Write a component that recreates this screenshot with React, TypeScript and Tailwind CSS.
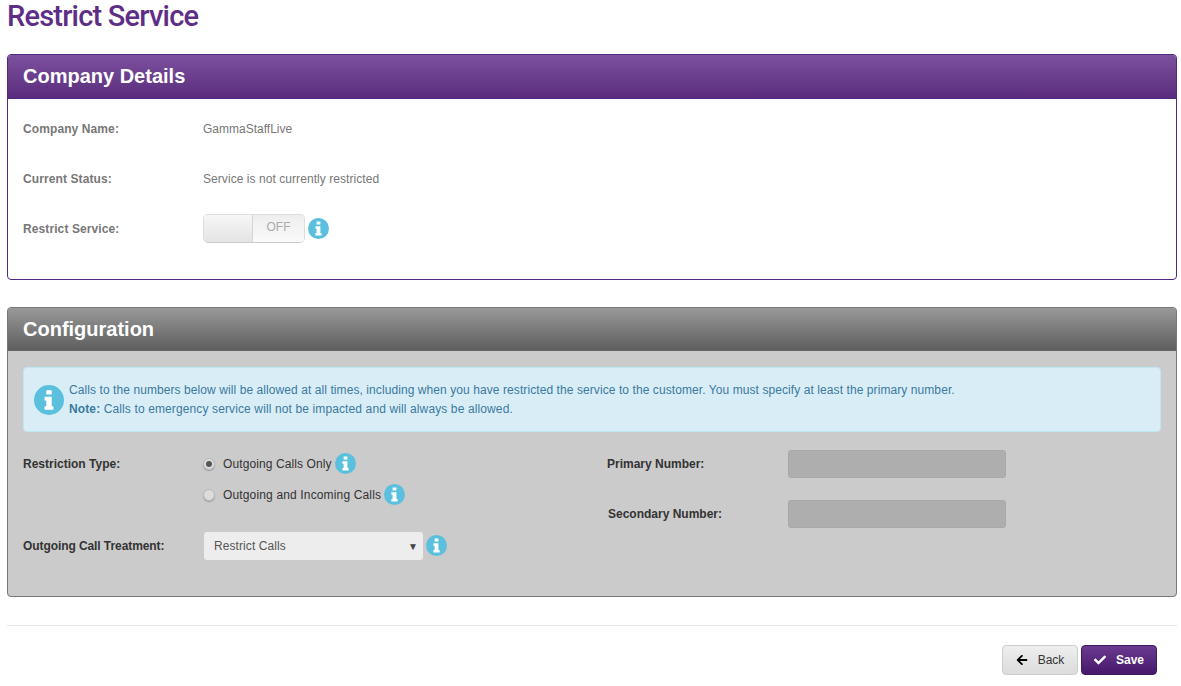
import React from "react";
import { FaArrowLeft, FaCheck } from "react-icons/fa";

// slab "i" disc, the package one has a thinner stem
const InfoDisc = ({ className = "" }: { className?: string }) => (
  <svg viewBox="0 0 21 21" className={`shrink-0 ${className}`}>
    <circle cx="10.5" cy="10.5" r="10.5" fill="#5bc0de" />
    <path
      fill="#fff"
      d="M8.6 3.6h3.8v3H8.6zM7.4 8.2h5v6.7h1.2v2.5H7.4v-2.5h1.2v-4.1H7.4z"
    />
  </svg>
);

const Info = ({ className = "" }: { className?: string }) => (
  <InfoDisc className={`w-[21px] h-[21px] ${className}`} />
);

const DetailRow = ({ label, children }: { label: string; children: React.ReactNode }) => (
  <div className="flex items-center h-[50px]">
    <span className="w-[180px] font-bold text-[#777] tracking-[0.1px]">{label}</span>
    {children}
  </div>
);

const Radio = ({ checked }: { checked?: boolean }) => (
  <span className="w-3 h-3 mr-2 rounded-full bg-[#dcdcdc] border border-[#bbb] shadow-[0_1px_1px_rgba(0,0,0,0.25)] flex items-center justify-center shrink-0">
    {checked && <span className="w-[6px] h-[6px] rounded-full bg-[#555]" />}
  </span>
);

const App: React.FC = () => {
  return (
    <div className="w-[1181px] h-[686px] overflow-hidden bg-white px-[7px] text-[12px] font-['Liberation_Sans',Arial,sans-serif]">
      <h1 className="h-[54px] text-[29px] leading-[32px] font-medium text-[#5e2d85] font-['Roboto',sans-serif] tracking-[-0.8px]">
        Restrict Service
      </h1>

      <section className="w-[1170px] h-[226px] border border-[#4e2a84] rounded-[4px] overflow-hidden">
        <div className="h-11 pl-[15px] pb-[2px] flex items-center bg-gradient-to-b from-[#7c519f] to-[#5b2c7d] border-b border-[#4e2a84]">
          <h2 className="text-[20px] font-bold text-white">Company Details</h2>
        </div>
        <div className="pt-[5px] px-[15px]">
          <DetailRow label="Company Name:">
            <span className="text-[#777]">GammaStaffLive</span>
          </DetailRow>
          <DetailRow label="Current Status:">
            <span className="text-[#777] tracking-[0.06px]">Service is not currently restricted</span>
          </DetailRow>
          <DetailRow label="Restrict Service:">
            <div className="flex w-[102px] h-[29px] mb-[2px] rounded-[5px] border border-[#ddd] border-b-[#ccc] overflow-hidden">
              <div className="w-[49px] bg-gradient-to-b from-[#f6f6f6] to-[#e4e4e4] border-r border-[#d4d4d4]" />
              <div className="flex-1 pb-[3px] flex items-center justify-center bg-gradient-to-b from-[#eeeeee] to-[#fafafa] text-[#aaa]">
                OFF
              </div>
            </div>
            <Info className="ml-[3px] mb-px" />
          </DetailRow>
        </div>
      </section>

      <section className="mt-[27px] w-[1170px] h-[290px] border border-[#777] rounded-[4px] overflow-hidden bg-[#cbcbcb]">
        <div className="h-[43px] pl-[15px] pb-px flex items-center bg-gradient-to-b from-[#999999] to-[#5f5f5f] border-b border-[#666]">
          <h2 className="text-[20px] font-bold text-white">Configuration</h2>
        </div>
        <div className="pt-4 px-[15px]">
          <div className="h-[65px] flex items-center pl-[10px] bg-[#d9edf7] border border-[#bce8f1] rounded-[4px] text-[#3a7a9e]">
            <InfoDisc className="w-[30px] h-[30px] mr-[5px]" />
            <div className="leading-[19px]">
              <p className="tracking-[0.08px]">Calls to the numbers below will be allowed at all times, including when you have restricted the service to the customer. You must specify at least the primary number.</p>
              <p className="tracking-[0.12px]">
                <b>Note:</b> Calls to emergency service will not be impacted and will always be allowed.
              </p>
            </div>
          </div>

          <div className="flex">
            <div className="w-[584px] pt-4 text-[#333]">
              <div className="flex">
                <span className="w-[180px] h-[31px] flex items-center font-bold">Restriction Type:</span>
                <div>
                  <div className="h-[31px] flex items-center tracking-[0.1px]">
                    <Radio checked />
                    <span>Outgoing Calls Only</span>
                    <Info className="ml-[3px]" />
                  </div>
                  <div className="h-[31px] flex items-center tracking-[0.15px]">
                    <Radio />
                    <span>Outgoing and Incoming Calls</span>
                    <Info className="ml-[3px]" />
                  </div>
                </div>
              </div>
              <div className="flex items-center mt-[22px]">
                <span className="w-[180px] font-bold tracking-[-0.08px]">Outgoing Call Treatment:</span>
                <div className="w-[219px] h-7 ml-px pl-[10px] pr-[5px] flex items-center justify-between bg-[#ededed] rounded-[3px] text-[#555] tracking-[0.08px]">
                  <span>Restrict Calls</span>
                  <span className="text-[10px] text-[#444]">▼</span>
                </div>
                <Info className="ml-[3px] mb-px" />
              </div>
            </div>

            <div className="pt-[18px] text-[#333]">
              <div className="flex items-center">
                <span className="w-[181px] font-bold">Primary Number:</span>
                <div className="w-[218px] h-7 bg-[#aeaeae] border border-[#a8a8a8] rounded-[3px]" />
              </div>
              <div className="flex items-center mt-[22px]">
                <span className="w-[180px] ml-px font-bold">Secondary Number:</span>
                <div className="w-[218px] h-7 bg-[#aeaeae] border border-[#a8a8a8] rounded-[3px]" />
              </div>
            </div>
          </div>
        </div>
      </section>

      <div className="mt-7 w-[1170px] border-t border-[#e6e6e6] pt-[19px] pr-5 flex justify-end gap-[3px]">
        <button className="w-[76px] h-[30px] flex items-center justify-center gap-[10px] rounded-[4px] border border-[#ccc] bg-gradient-to-b from-[#eeeeee] to-[#dcdcdc] text-[#333]">
          <FaArrowLeft className="text-[12px] text-black" />
          Back
        </button>
        <button className="w-[76px] h-[30px] flex items-center justify-center gap-[10px] rounded-[4px] border border-[#3d1a5c] bg-gradient-to-b from-[#6b3a91] to-[#461769] font-bold text-white">
          <FaCheck className="text-[12px]" />
          Save
        </button>
      </div>
    </div>
  );
};

export default App;
